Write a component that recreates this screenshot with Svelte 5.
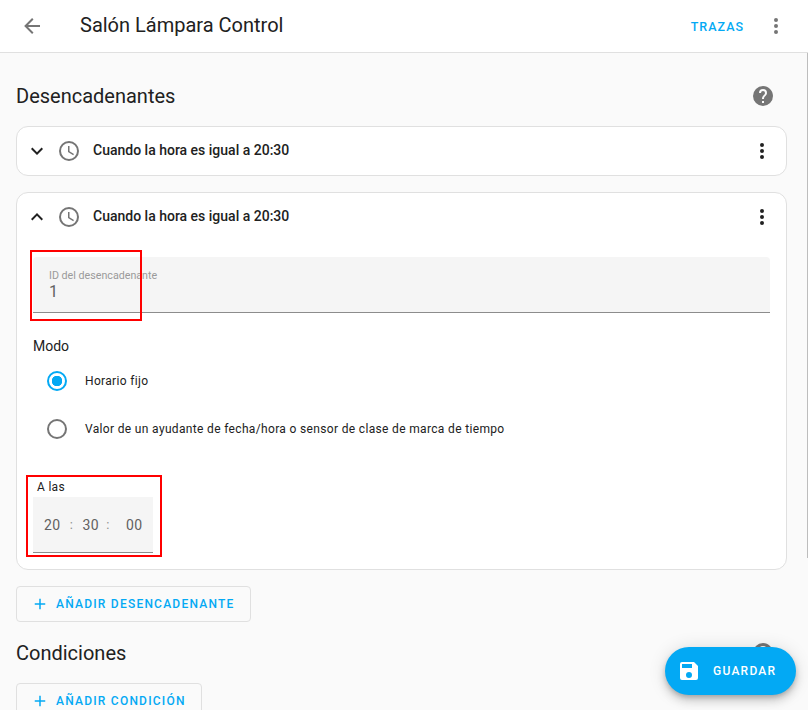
<script>
  const clock = "M12 20a8 8 0 1 1 0-16 8 8 0 0 1 0 16m0-18a10 10 0 1 0 0 20 10 10 0 0 0 0-20m.5 5H11v6l5.2 3.2.8-1.3-4.5-2.7z";
  const dots = "M12 16a2 2 0 1 1 0 4 2 2 0 0 1 0-4m0-6a2 2 0 1 1 0 4 2 2 0 0 1 0-4m0-6a2 2 0 1 1 0 4 2 2 0 0 1 0-4z";
  const plus = "M19 13h-6v6h-2v-6H5v-2h6V5h2v6h6v2z";
  const help = "M15.07 11.25l-.9.92C13.45 12.89 13 13.5 13 15h-2v-.5c0-1.11.45-2.11 1.17-2.83l1.24-1.26c.37-.36.59-.86.59-1.41a2 2 0 0 0-2-2 2 2 0 0 0-2 2H8a4 4 0 0 1 4-4 4 4 0 0 1 4 4c0 .88-.36 1.67-.93 2.25M13 19h-2v-2h2M12 2A10 10 0 0 0 2 12a10 10 0 0 0 10 10 10 10 0 0 0 10-10c0-5.53-4.5-10-10-10z";
  const title = "Cuando la hora es igual a 20:30";
</script>

<div class="page">
  <header class="topbar">
    <svg class="back" viewBox="0 0 24 24"><path d="M20 11v2H8l5.5 5.5-1.42 1.42L4.16 12l7.92-7.92L13.5 5.5 8 11h12z" /></svg>
    <div class="title">Salón Lámpara Control</div>
    <span class="traces">TRAZAS</span>
    <svg class="more" viewBox="0 0 24 24"><path d={dots} /></svg>
  </header>

  <main class="content">
    <div class="section-head">
      <h2>Desencadenantes</h2>
      <svg class="help" viewBox="0 0 24 24"><path d={help} /></svg>
    </div>

    <section class="card">
      <div class="row">
        <svg class="chev" viewBox="0 0 24 24"><path d="M7.41 8.58 12 13.17l4.59-4.59L18 10l-6 6-6-6 1.41-1.42z" /></svg>
        <svg class="clock" viewBox="0 0 24 24"><path d={clock} /></svg>
        <span class="row-title">{title}</span>
        <svg class="row-more" viewBox="0 0 24 24"><path d={dots} /></svg>
      </div>
    </section>

    <section class="card open">
      <div class="row">
        <svg class="chev" viewBox="0 0 24 24"><path d="M7.41 15.41 12 10.83l4.59 4.58L18 14l-6-6-6 6 1.41 1.41z" /></svg>
        <svg class="clock" viewBox="0 0 24 24"><path d={clock} /></svg>
        <span class="row-title">{title}</span>
        <svg class="row-more" viewBox="0 0 24 24"><path d={dots} /></svg>
      </div>

      <div class="body">
        <div class="textfield">
          <span class="float-label">ID del desencadenante</span>
          <span class="value">1</span>
          <div class="mark mark-id"></div>
        </div>

        <div class="modo">Modo</div>
        <div class="radio-row">
          <span class="radio on"></span>
          <span class="radio-label">Horario fijo</span>
        </div>
        <div class="radio-row second">
          <span class="radio"></span>
          <span class="radio-label">Valor de un ayudante de fecha/hora o sensor de clase de marca de tiempo</span>
        </div>

        <div class="time-wrap">
          <div class="time-label">A las</div>
          <div class="time">
            <span class="num">20</span><span class="sep first">:</span>
            <span class="num">30</span><span class="sep">:</span>
            <span class="num last">00</span>
          </div>
          <div class="mark mark-time"></div>
        </div>
      </div>
    </section>

    <button class="outlined">
      <svg viewBox="0 0 24 24"><path d={plus} /></svg>
      AÑADIR DESENCADENANTE
    </button>

    <div class="section-head second-head">
      <h2>Condiciones</h2>
      <svg class="help" viewBox="0 0 24 24"><path d={help} /></svg>
    </div>

    <button class="outlined">
      <svg viewBox="0 0 24 24"><path d={plus} /></svg>
      AÑADIR CONDICIÓN
    </button>
  </main>

  <div class="scroll-line"></div>

  <button class="fab">
    <svg viewBox="0 0 24 24"><path d="M15 9H5V5h10m-3 14a3 3 0 0 1-3-3 3 3 0 0 1 3-3 3 3 0 0 1 3 3 3 3 0 0 1-3 3m5-16H5a2 2 0 0 0-2 2v14a2 2 0 0 0 2 2h14a2 2 0 0 0 2-2V7l-4-4z" /></svg>
    GUARDAR
  </button>
</div>

<style>
  :global(body) {
    margin: 0;
    background: #fafafa;
  }

  .page {
    position: relative;
    height: 710px;
    overflow: hidden;
    font-family: Roboto, "Liberation Sans", sans-serif;
    color: #212121;
    background: #fafafa;
  }

  .topbar {
    display: flex;
    align-items: center;
    height: 52px;
    background: #fff;
    border-bottom: 1px solid #e0e0e0;
    padding: 0 20px 0 20px;
  }

  .back {
    width: 24px;
    height: 24px;
    fill: #757575;
    margin-right: 36px;
  }

  .title {
    font-size: 20px;
    flex: 1;
    position: relative;
    top: -1px;
  }

  .traces {
    font-size: 12.5px;
    font-weight: 500;
    letter-spacing: 1px;
    color: #03a9f4;
    margin-right: 20px;
  }

  .more {
    width: 24px;
    height: 24px;
    fill: #757575;
  }

  .content {
    padding: 0 20px 0 16px;
  }

  .scroll-line {
    position: absolute;
    top: 53px;
    right: 0;
    width: 1px;
    height: 505px;
    background: #bdbdbd;
  }

  .section-head {
    display: flex;
    align-items: center;
    justify-content: space-between;
    height: 30px;
    margin-top: 28px;
    margin-bottom: 15px;
    padding-right: 13px;
  }

  h2 {
    margin: 0;
    font-size: 20px;
    font-weight: 400;
  }

  .help {
    width: 24px;
    height: 24px;
    fill: #757575;
  }

  .card {
    background: #fff;
    border: 1px solid #e0e0e0;
    border-radius: 12px;
    width: 771px;
    box-sizing: border-box;
    height: 50px;
    margin-bottom: 16px;
  }

  .card.open {
    height: 378px;
  }

  .row {
    display: flex;
    align-items: center;
    height: 48px;
    padding: 0 12px 0 8px;
  }

  .open .row {
    height: 47px;
  }

  .chev {
    width: 24px;
    height: 24px;
    fill: #212121;
  }

  .clock {
    width: 24px;
    height: 24px;
    fill: #757575;
    margin-left: 8px;
    margin-right: 12px;
  }

  .row-title {
    flex: 1;
    font-size: 14px;
    font-weight: 500;
    position: relative;
    top: -1px;
  }

  .row-more {
    width: 24px;
    height: 24px;
    fill: #212121;
  }

  .body {
    padding: 17px 16px 0;
  }

  .textfield {
    position: relative;
    height: 55px;
    background: #f5f5f5;
    border-bottom: 1px solid #8c8c8c;
    border-radius: 4px 4px 0 0;
    padding-left: 16px;
  }

  .float-label {
    position: absolute;
    top: 12px;
    font-size: 10.7px;
    color: #9a9a9a;
  }

  .value {
    position: absolute;
    top: 25px;
    font-size: 16px;
    color: #616161;
  }

  .mark {
    position: absolute;
    border: 2px solid #f00;
    box-sizing: border-box;
    pointer-events: none;
  }

  .mark-id {
    left: -3px;
    top: -7px;
    width: 112px;
    height: 71px;
  }

  .modo {
    margin-top: 24px;
    font-size: 14px;
    line-height: 18px;
  }

  .radio-row {
    display: flex;
    align-items: center;
    height: 24px;
    margin-top: 14px;
    padding-left: 14px;
  }

  .radio-row.second {
    margin-top: 24px;
  }

  .radio {
    width: 20px;
    height: 20px;
    box-sizing: border-box;
    border: 2px solid #757575;
    border-radius: 50%;
    margin-right: 18px;
    flex: none;
  }

  .radio.on {
    border-color: #03a9f4;
    background: radial-gradient(circle, #03a9f4 0 5px, transparent 5.5px);
  }

  .radio-label {
    font-size: 12px;
    letter-spacing: 0.34px;
  }

  .time-wrap {
    position: relative;
    margin-top: 37px;
    width: 120px;
  }

  .time-label {
    font-size: 12px;
    line-height: 16px;
    padding: 1px 0 0 4px;
    letter-spacing: 0.3px;
  }

  .time {
    display: flex;
    align-items: center;
    height: 55px;
    margin-top: 2px;
    background: #f5f5f5;
    border-bottom: 1px solid #8c8c8c;
    font-size: 14px;
    color: #616161;
    padding-left: 11px;
    letter-spacing: 0.4px;
  }

  .sep {
    width: 18px;
    text-align: center;
    color: #8f8f8f;
    font-size: 13px;
  }

  .sep.first {
    width: 22px;
  }

  .num.last {
    margin-left: 9px;
  }

  .mark-time {
    left: -7px;
    top: -3px;
    width: 136px;
    height: 82px;
  }

  .outlined {
    display: flex;
    align-items: center;
    height: 36px;
    padding: 0 15px 0 14px;
    background: transparent;
    border: 1px solid #e0e0e0;
    border-radius: 4px;
    font-family: inherit;
    font-size: 12px;
    font-weight: 500;
    letter-spacing: 1.22px;
    color: #03a9f4;
  }

  .outlined svg {
    width: 18px;
    height: 18px;
    fill: #03a9f4;
    margin-right: 7px;
  }

  .second-head {
    margin-top: 16px;
    margin-bottom: 15px;
  }

  .fab {
    position: absolute;
    left: 665px;
    top: 647px;
    width: 131px;
    height: 48px;
    display: flex;
    align-items: center;
    padding: 0 0 0 12px;
    border: none;
    border-radius: 24px;
    background: #03a9f4;
    color: #fff;
    font-family: inherit;
    font-size: 12px;
    font-weight: 500;
    letter-spacing: 1.25px;
    box-shadow: 0 3px 5px -1px rgba(0,0,0,.2), 0 6px 10px rgba(0,0,0,.14), 0 1px 18px rgba(0,0,0,.12);
  }

  .fab svg {
    width: 24px;
    height: 24px;
    fill: #fff;
    margin-right: 12px;
  }
</style>
